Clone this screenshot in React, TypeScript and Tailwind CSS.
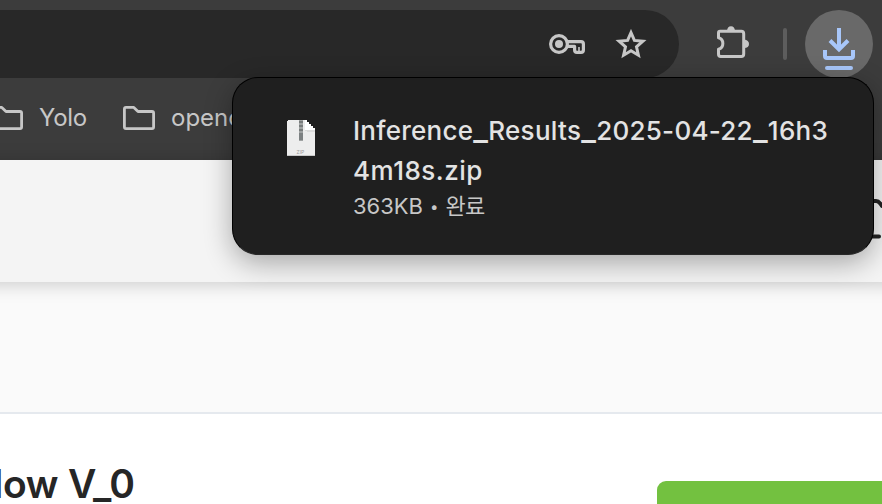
function KeyIcon() {
  return (
    <svg className="h-5 w-9" viewBox="0 0 36 20" fill="none" stroke="#c7c7c7" strokeWidth="3.2" strokeLinejoin="round">
      <circle cx="10" cy="10" r="8.4" />
      <circle cx="10" cy="10" r="4" fill="#c7c7c7" stroke="none" />
      <path d="M17.5 7.7H32Q34.4 7.7 34.4 10V16Q34.4 18.4 32 18.4H28Q25.6 18.4 25.6 16V12.4H17.5" />
      <path d="M30 13V17" strokeWidth="1.6" />
    </svg>
  );
}

function StarIcon() {
  return (
    <svg className="h-[30px] w-8" viewBox="0 0 32 30" fill="none" stroke="#c7c7c7" strokeWidth="3">
      <path d="M16 3.6L19.4 11.4L27.9 12.2L21.5 17.8L23.4 26.2L16 21.7L8.6 26.2L10.5 17.8L4.1 12.2L12.6 11.4Z" />
    </svg>
  );
}

function PuzzleIcon() {
  return (
    <svg className="h-8 w-8" viewBox="0 0 32 32">
      <path d="M10 5Q10.3 .2 14 .2T18 5ZM27 13.5Q32 14.2 32 18T27 22Z" fill="#c7c7c7" />
      <path d="M3 5.3H24.3Q26.7 5.3 26.7 7.7V28Q26.7 30.4 24.3 30.4H3.7Q1.5 30.4 1.5 28V23.3C7.3 21.8 7.3 13.2 1.5 11.8V7Q1.5 5.3 3 5.3Z" fill="none" stroke="#c7c7c7" strokeWidth="3" strokeLinejoin="round" />
    </svg>
  );
}

function DownloadIcon() {
  return (
    <svg className="h-[43px] w-8" viewBox="0 0 32 43" fill="none" stroke="#a8c7fa" strokeWidth="4">
      <path d="M16 0V21M7 12.5L16 21.5L25 12.5" />
      <path d="M2 22V28Q2 30 4 30H28Q30 30 30 28V22" />
      <path d="M4 40H28" strokeLinecap="round" />
    </svg>
  );
}

function FolderIcon() {
  return (
    <svg className="h-6 w-8 shrink-0" viewBox="0 0 32 24" fill="none" stroke="#c7c7c7" strokeWidth="2.8" strokeLinejoin="round">
      <path d="M3 1.4H10.8L15 5.5H29Q30.6 5.5 30.6 7V21Q30.6 22.6 29 22.6H3Q1.4 22.6 1.4 21V3Q1.4 1.4 3 1.4Z" />
    </svg>
  );
}

function ZipIcon() {
  return (
    <svg className="h-9 w-7 shrink-0" viewBox="0 0 28 36" shapeRendering="crispEdges">
      <path d="M1 0H18V2H20V4H22V6H24V8H26V10H28V35H27V36H1V35H0V1H1Z" fill="#ededed" />
      <path d="M18 0V10H28V8H26V6H24V4H22V2H20V0Z" fill="#fff" />
      <path d="M18 10H28V12H20V11H18Z" fill="#dcdcdc" />
      <path d="M12 0H16V21H12Z" fill="#a0a3a3" />
      <path d="M12 2H16M12 6H16M12 10H16" stroke="#787c7c" strokeWidth="2" />
      <path d="M12 13H16V20H12Z" fill="#7d8182" />
      <path d="M0 35H28" stroke="#c8c8c8" />
      <text x="9.5" y="33.5" fontSize="5" fontFamily="Inter, sans-serif" fill="#999">ZIP</text>
    </svg>
  );
}

function Underscore() {
  return <span className="text-[1.22em] leading-none">_</span>;
}

export default function App() {
  return (
    <div className="relative flex h-[504px] w-[882px] flex-col overflow-hidden bg-white font-['Inter','Noto_Sans_CJK_KR',sans-serif]">
      <div className="flex h-[78px] shrink-0 bg-[#3c3c3c] pt-[10px]">
        <div className="flex h-[68px] w-[679px] items-center justify-end gap-[30px] rounded-r-full bg-[#282828] pr-8">
          <KeyIcon />
          <StarIcon />
        </div>
        <div className="ml-[38px] mt-4"><PuzzleIcon /></div>
        <div className="ml-[34px] mt-[18px] h-8 w-1 rounded-full bg-[#5d5d5d]" />
        <div className="ml-[18px] flex size-[68px] justify-center rounded-full bg-[#696969] pt-[18px]">
          <DownloadIcon />
        </div>
      </div>

      <div className="flex h-[82px] shrink-0 items-start bg-[#3c3c3c] pt-7 text-2xl leading-6 text-[#c7c7c7]">
        <div className="-ml-[9px]"><FolderIcon /></div>
        <span className="ml-4 w-[84px] tracking-[-0.3px]">Yolo</span>
        <FolderIcon />
        <span className="ml-4">opencv</span>
      </div>

      <header className="z-10 -mx-6 flex h-[122px] shrink-0 justify-end bg-[#f4f4f4] pr-6 pt-[38px] shadow-[0_2px_18px_rgba(0,0,0,0.2)]">
        <svg className="h-11 w-[18px]" viewBox="0 0 18 44" fill="none" stroke="#222" strokeWidth="4" strokeLinecap="round">
          <path d="M4 3H12Q15 3 18 8M4 38.5H15" />
        </svg>
      </header>

      <div className="h-[132px] shrink-0 border-b-2 border-[#e5e9ee] bg-[#fafafa]" />

      <main className="flex grow items-start justify-between overflow-hidden">
        <h1 className="-ml-[7px] mt-[45px] whitespace-nowrap text-[39px] font-semibold leading-[50px] tracking-[-0.25px] text-[#262626]">low V_0</h1>
        <div className="mt-[67px] h-10 w-[225px] rounded-tl-[9px] bg-[#73c140]" />
      </main>

      <div className="absolute left-[232px] top-[77px] z-20 flex h-[178px] w-[642px] rounded-[26px] border border-black border-b-[#282828] bg-[#1f1f1f] pl-[54px] pt-[33px] shadow-[0_8px_28px_rgba(0,0,0,0.32)]">
        <div className="mt-[9px]"><ZipIcon /></div>
        <div className="ml-[38px]">
          <div className="w-[490px] text-[26px] font-medium leading-10 text-[#e3e3e3]">
            <p className="whitespace-nowrap tracking-[0.27px]">Inference<Underscore />Results<Underscore />2025-04-22<Underscore />16h3</p>
            <p className="tracking-[0.5px]">4m18s.zip</p>
          </div>
          <p className="flex items-center text-[22px] leading-[31px] text-[#c7c7c7]">
            363KB<span className="mx-[7px] text-[15px]">•</span><span className="tracking-[-0.7px]">완료</span>
          </p>
        </div>
      </div>
    </div>
  );
}
